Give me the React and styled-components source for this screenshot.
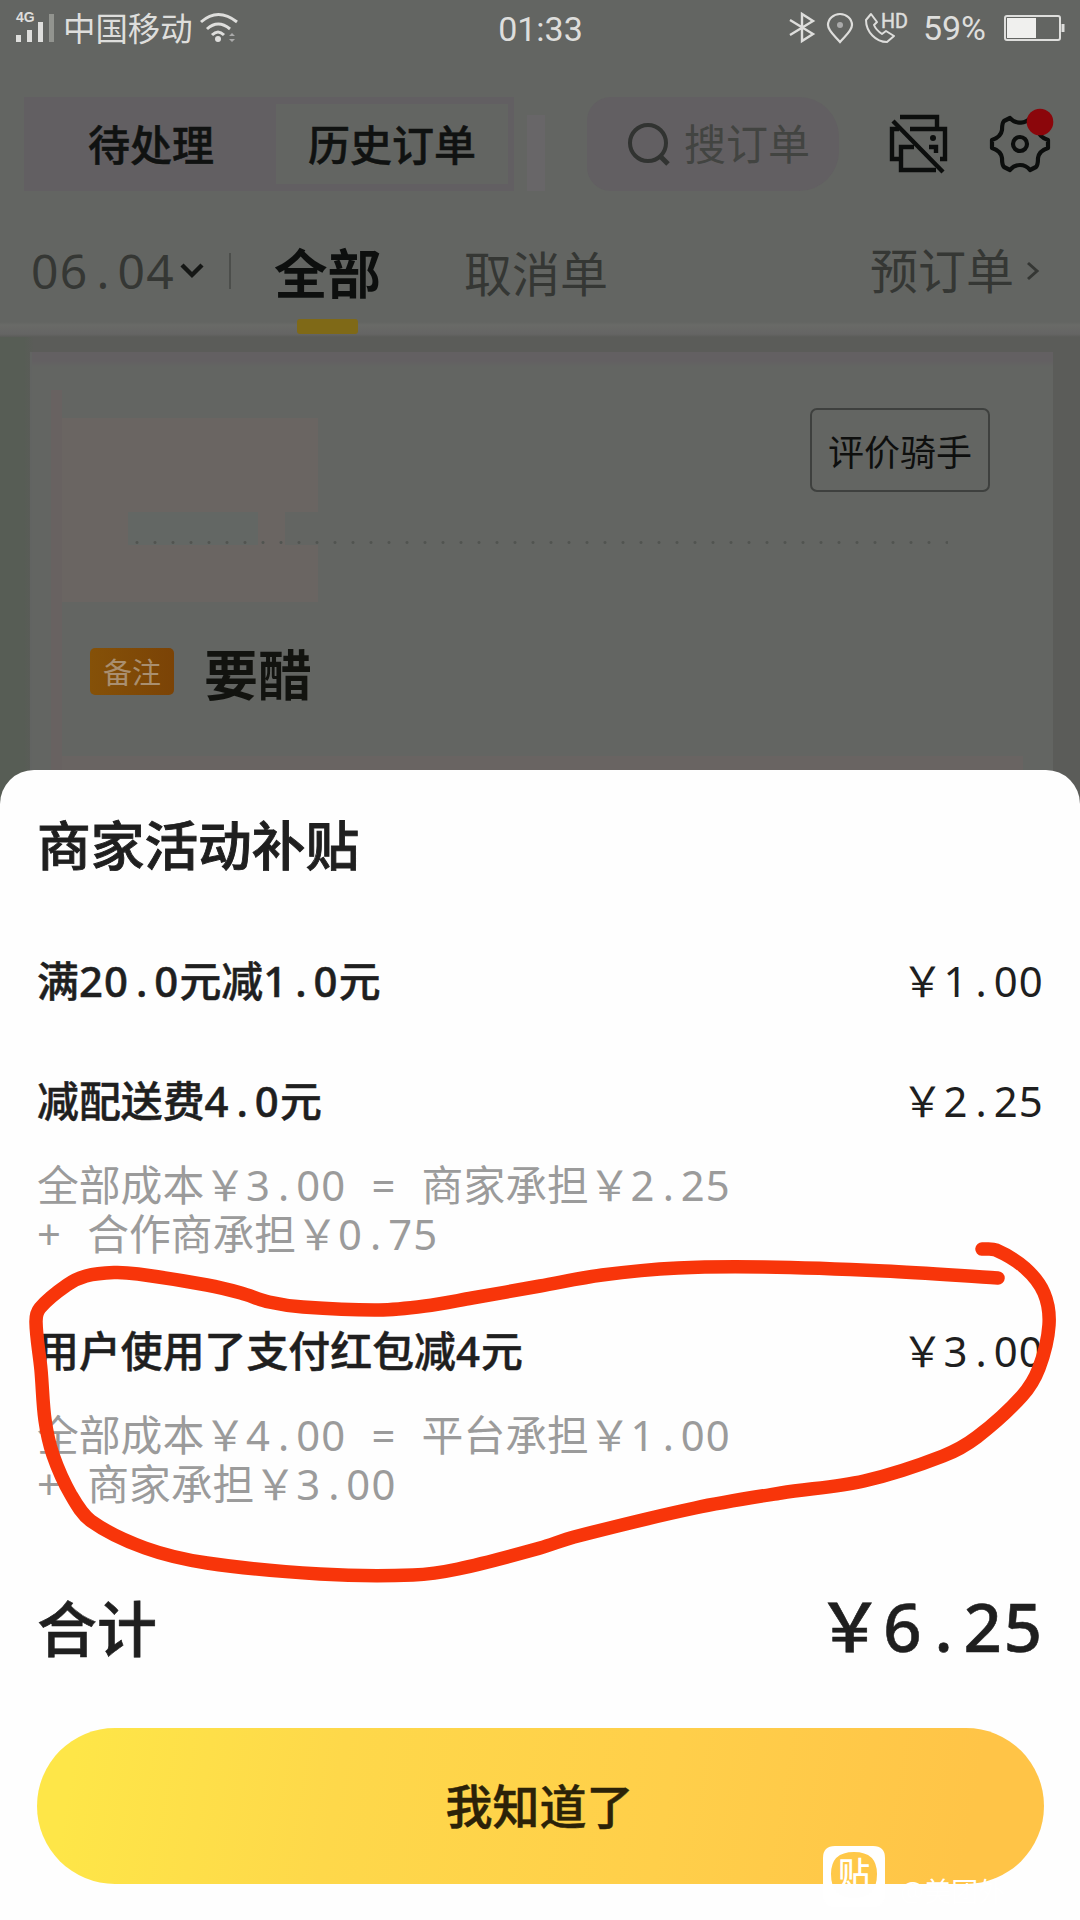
import React from 'react';
import styled, { createGlobalStyle } from 'styled-components';

const GlobalStyle = createGlobalStyle`
  * { box-sizing: border-box; }
  body { margin: 0; background: #636562; }
`;

const Page = styled.div`
  position: relative;
  width: 1080px;
  height: 1920px;
  overflow: hidden;
  display: flex;
  flex-direction: column;
  background: #636562;
  font-family: "Noto Sans", "Noto Sans CJK SC", sans-serif;
  white-space: nowrap;
`;

/* Latin characters sit on a 0.6em grid between full-width characters */
const Digits = styled.span`
  display: inline-block;
  letter-spacing: 0.028em;
`;
const Cell = styled.span`
  display: inline-block;
  width: 0.6em;
  text-align: center;
  white-space: pre;
`;

function Mono({ children }) {
  return children.split(/([0-9=+]+|[. ])/).filter(Boolean).map((part, i) => {
    if (/^[. ]$/.test(part)) return <Cell key={i}>{part}</Cell>;
    if (/^[0-9=+]+$/.test(part)) return <Digits key={i}>{part}</Digits>;
    return part;
  });
}

const StatusBar = styled.div`
  height: 56px;
  flex: none;
  display: grid;
  grid-template-columns: 1fr auto 1fr;
  align-items: center;
  padding: 0 15px 0 16px;
  color: #dededc;
`;
const StatusSide = styled.div`
  display: flex;
  align-items: center;
  justify-content: ${(p) => (p.$end ? 'flex-end' : 'flex-start')};
  gap: ${(p) => p.$gap}px;
`;
const Signal = styled.div`
  display: flex;
  flex-direction: column;
  width: 40px;
  height: 30px;
  margin-top: -3px;
`;
const NetType = styled.span`
  font: 700 14px/11px "Liberation Sans", sans-serif;
  height: 11px;
`;
const Bars = styled.div`
  display: flex;
  align-items: flex-end;
  gap: 6px;
  height: 19px;
`;
const Bar = styled.i`
  width: 5px;
  flex: none;
  height: ${(p) => p.$h}px;
  background: ${(p) => (p.$dim ? '#92948f' : '#dededc')};
`;
const Carrier = styled.span`
  font-size: 32.4px;
  line-height: 40px;
`;
const Clock = styled.span`
  font: 400 34px/40px Roboto, sans-serif;
  margin-top: 2px;
`;
const Percent = styled.span`
  font: 400 34px/40px Roboto, sans-serif;
  margin: 0 6px 0 3px;
`;
const Icon = styled.svg`
  display: block;
  flex: none;
  overflow: visible;
`;

const Header = styled.div`
  flex: none;
  display: flex;
  align-items: center;
  height: 94px;
  margin-top: 41px;
  padding: 0 26px 0 24px;
`;
const Tabs = styled.div`
  display: flex;
  width: 490px;
  height: 94px;
  background: #625f62;
`;
const Tab = styled.div`
  width: ${(p) => p.$w}px;
  padding-left: ${(p) => p.$pl}px;
  height: ${(p) => (p.$active ? 80 : 94)}px;
  margin-top: ${(p) => (p.$active ? 7 : 0)}px;
  background: ${(p) => (p.$active ? '#636562' : 'transparent')};
  color: #101211;
  font-size: 42px;
  font-weight: 500;
  -webkit-text-stroke: 0.5px currentColor;
  line-height: ${(p) => (p.$active ? 82 : 96)}px;
`;
const Sliver = styled.i`
  width: 18px;
  height: 76px;
  margin: 18px 0 0 13px;
  background: #686668;
`;
const Search = styled.div`
  display: flex;
  align-items: center;
  gap: 12px;
  width: 252px;
  height: 94px;
  margin-left: 42px;
  padding-left: 41px;
  border-radius: 24px 40px 40px 24px;
  background: #625f62;
  color: #424441;
  font-size: 42px;
  line-height: 90px;
`;
const HeaderIcons = styled.div`
  display: flex;
  align-items: center;
  gap: 42px;
  margin-left: 51px;
`;

const FilterBar = styled.div`
  flex: none;
  display: flex;
  height: 146px;
  padding: 47px 41px 0 31px;
  background: linear-gradient(to bottom, transparent 131px, #696a67 134px, #656564 143px, #5b5c59 146px);
  color: #353734;
  font-size: 48px;
  line-height: 66px;
`;
const DatePick = styled.div`
  display: flex;
  align-items: center;
  height: 66px;
  gap: 6px;
`;
const Divider = styled.i`
  width: 2px;
  height: 36px;
  margin: 15px 0 0 26px;
  background: #4c4e4b;
`;
const Filter = styled.div`
  display: flex;
  flex-direction: column;
  align-items: center;
  height: 97px;
  margin-left: ${(p) => p.$ml}px;
  padding-top: 3px;
  font-size: ${(p) => (p.$active ? 53.5 : 48)}px;
  font-weight: ${(p) => (p.$active ? 700 : 400)};
  color: ${(p) => (p.$active ? '#0d0f0e' : '#353734')};
`;
const Underline = styled.i`
  width: 61px;
  height: 15px;
  flex: none;
  margin-top: 12px;
  border-radius: 3px;
  background: #7f6917;
`;
const Preorder = styled.div`
  display: flex;
  align-items: center;
  gap: 12px;
  height: 66px;
  margin: 0 0 0 auto;
`;

const Feed = styled.div`
  flex: 1;
  padding: 15px 27px 0 30px;
  background: linear-gradient(to right, #575d55 24px, #5b5c59 34px);
`;
const Card = styled.div`
  height: 100%;
  background: linear-gradient(to bottom, #636062 9px, #636562 15px);
  border-left: 2px solid #626462;
`;
const CardInner = styled.div`
  display: flex;
  flex-direction: column;
  height: 418px;
  margin: 0 30px 0 19px;
  padding: 56px 33px 0 11px;
  background:
    linear-gradient(#686261, #686261) 0 38px / 11px 380px no-repeat,
    linear-gradient(#696462, #696462) 0 404px / 100% 14px no-repeat,
    linear-gradient(#6a6562, #6a6562) 9px 66px / 258px 184px no-repeat;
`;
const RateButton = styled.div`
  align-self: flex-end;
  width: 180px;
  height: 84px;
  border: 2px solid #3e403e;
  border-radius: 7px;
  text-align: center;
  font-size: 36px;
  line-height: 85px;
  color: #0e0f0e;
`;
const Masked = styled.div`
  height: 33px;
  width: 820px;
  margin: 20px 0 0 66px;
  background:
    radial-gradient(circle, #515450 1px, transparent 2px) 0 26px / 18px 9px repeat-x,
    linear-gradient(to right, #636764 130px, transparent 130px, transparent 157px, #636562 157px);
`;
const Note = styled.div`
  display: flex;
  align-items: center;
  gap: 30px;
  height: 60px;
  margin: 96px 0 0 28px;
`;
const NoteTag = styled.span`
  width: 84px;
  height: 47px;
  border-radius: 5px;
  background: linear-gradient(to right, #855108, #7b4306);
  color: #a98f70;
  text-align: center;
  font-size: 29px;
  line-height: 49px;
`;
const NoteText = styled.span`
  color: #12130f;
  font-size: 54px;
  font-weight: 700;
  line-height: 60px;
  padding-top: 8px;
`;

const Sheet = styled.section`
  position: absolute;
  left: 0;
  right: 0;
  bottom: 0;
  height: 1150px;
  display: flex;
  flex-direction: column;
  padding: 43px 36px 36px 37px;
  border-radius: 34px 34px 0 0;
  background: #fefefe;
  color: #1f1f1f;
`;
const Title = styled.h2`
  margin: 0;
  font-size: 53.7px;
  font-weight: 500;
  -webkit-text-stroke: 0.9px currentColor;
  line-height: 66px;
`;
const Item = styled.div`
  margin-top: ${(p) => p.$mt}px;
`;
const Line = styled.div`
  display: flex;
  justify-content: space-between;
  font-size: 41.9px;
  line-height: 60px;
`;
const Name = styled.span`
  font-weight: 500;
  -webkit-text-stroke: 0.5px currentColor;
`;
const Detail = styled.p`
  margin: 29px 0 0;
  color: #9b9b9b;
  font-size: 41.8px;
  line-height: 49.3px;
`;
const Total = styled.div`
  display: flex;
  justify-content: space-between;
  align-items: baseline;
  margin-top: 73px;
  font-size: 60px;
  font-weight: 500;
  -webkit-text-stroke: 0.6px currentColor;
  line-height: 90px;
`;
const Sum = styled.span`
  font-size: 67px;
`;
const Confirm = styled.button`
  height: 156px;
  flex: none;
  width: 1007px;
  margin: auto 0 0;
  padding: 0 2px 5px 0;
  border: 0;
  border-radius: 78px;
  background: linear-gradient(100deg, #fee648 4%, #fed84a 30%, #ffcf4a 62%, #ffc447 92%);
  color: #2b2208;
  font-family: inherit;
  font-size: 47px;
  font-weight: 500;
  -webkit-text-stroke: 0.5px currentColor;
`;
const Scribble = styled.svg`
  position: absolute;
  left: 0;
  top: 0;
  pointer-events: none;
`;
const Watermark = styled.div`
  position: absolute;
  left: 823px;
  top: 1846px;
  display: flex;
  color: #fff;
`;
const Badge = styled.div`
  width: 62px;
  height: 61px;
  display: grid;
  place-items: center;
  & > * { grid-area: 1 / 1; }
`;
const Glyph = styled.span`
  font-size: 32px;
  font-weight: 500;
  line-height: 40px;
  margin-top: -7px;
`;
const Handle = styled.span`
  margin: 28px 0 0 15px;
  font-size: 27px;
  line-height: 36px;
`;

const marks = [
  [998, 1278], [884, 1271], [764, 1267], [678, 1268], [602, 1275], [540, 1286], [472, 1298],
  [425, 1306], [379, 1310], [303, 1307], [269, 1302], [241, 1293], [207, 1285], [138, 1274],
  [114, 1272.5], [86, 1276], [67, 1285], [40, 1308], [36, 1322], [41, 1370], [45, 1420],
  [53, 1455], [71, 1495], [91, 1521], [145, 1548], [207, 1563], [320, 1574], [413, 1575],
  [458, 1569], [540, 1548], [574, 1537], [695, 1508], [781, 1493], [864, 1481], [943, 1456],
  [977, 1437], [1022, 1396], [1039, 1368], [1049, 1325], [1044, 1293], [1025, 1268], [996, 1250], [982, 1249],
];

function smooth(pts) {
  let d = `M${pts[0]}`;
  for (let i = 0; i < pts.length - 1; i++) {
    const a = pts[i - 1] || pts[i];
    const b = pts[i];
    const c = pts[i + 1];
    const e = pts[i + 2] || c;
    const len = Math.hypot(c[0] - b[0], c[1] - b[1]);
    const tangent = (p, q) => {
      const l = Math.hypot(q[0] - p[0], q[1] - p[1]) || 1;
      return [((q[0] - p[0]) / l) * len * 0.33, ((q[1] - p[1]) / l) * len * 0.33];
    };
    const t1 = tangent(a, c);
    const t2 = tangent(b, e);
    d += `C${b[0] + t1[0]},${b[1] + t1[1]} ${c[0] - t2[0]},${c[1] - t2[1]} ${c}`;
  }
  return d;
}

const HdLabel = styled.text`
  font: 400 21px Roboto, sans-serif;
`;

/* full-width yen sign */
const Y = '\uFFE5';

const items = [
  { name: '满20.0元减1.0元', amount: `${Y}1.00`, mt: 72 },
  { name: '减配送费4.0元', amount: `${Y}2.25`, mt: 60, detail: [`全部成本${Y}3.00 = 商家承担${Y}2.25`, `+ 合作商承担${Y}0.75`] },
  { name: '用户使用了支付红包减4元', amount: `${Y}3.00`, mt: 62, detail: [`全部成本${Y}4.00 = 平台承担${Y}1.00`, `+ 商家承担${Y}3.00`] },
];

export default function App() {
  return (
    <Page>
      <GlobalStyle />
      <StatusBar>
        <StatusSide $gap={7}>
          <Signal>
            <NetType>4G</NetType>
            <Bars><Bar $h={7} /><Bar $h={12} /><Bar $h={20} /><Bar $h={28} $dim /></Bars>
          </Signal>
          <Carrier>中国移动</Carrier>
          <Icon width="38" height="30" viewBox="0 0 38 30" fill="none" stroke="#dededc" strokeWidth="3">
            <path d="M1 9Q18 -6 37 9M7 16Q18 6 30 16M12 22Q18 16 24 22" />
            <circle cx="18" cy="26" r="3" fill="#dededc" stroke="none" />
            <path d="M29 23l3-3 3 3zM29 26l3 3 3-3z" fill="#aaa" stroke="none" />
          </Icon>
        </StatusSide>
        <Clock>01:33</Clock>
        <StatusSide $gap={12} $end>
          <Icon width="26" height="30" viewBox="0 0 26 30" fill="none" stroke="#dededc" strokeWidth="2.4">
            <path d="M1 7L24 21L13 28V1L24 8L1 22" />
          </Icon>
          <Icon width="26" height="30" viewBox="0 0 26 30" fill="none" stroke="#dededc" strokeWidth="2.2">
            <path d="M13 29C9 24 1 18 1 12a12 11 0 0 1 24 0C25 18 17 24 13 29Z" />
            <circle cx="13" cy="12" r="3" fill="#aaa" stroke="none" />
          </Icon>
          <Icon width="43" height="30" viewBox="0 0 43 30" fill="none" stroke="#dededc" strokeWidth="2" strokeLinejoin="round">
            <path d="M6 1L1 7C1 19 11 29 22 29L29 23L21 18L17 21Q11 17 9 12L12 9Z" />
            <HdLabel x="16" y="15" textLength="27" lengthAdjust="spacingAndGlyphs" fill="#dededc" stroke="#dededc" strokeWidth="0.5">HD</HdLabel>
          </Icon>
          <Percent>59%</Percent>
          <Icon width="61" height="26" viewBox="0 0 61 26" fill="none" stroke="#dededc" strokeWidth="2">
            <rect x="1" y="1" width="55" height="24" rx="2" />
            <rect x="3" y="3" width="29" height="20" fill="#f0f0ee" stroke="none" />
            <path d="M59 9v8" strokeWidth="3" />
          </Icon>
        </StatusSide>
      </StatusBar>

      <Header>
        <Tabs>
          <Tab $w={252} $pl={64}>待处理</Tab>
          <Tab $w={232} $pl={32} $active>历史订单</Tab>
        </Tabs>
        <Sliver />
        <Search>
          <Icon width="44" height="44" viewBox="0 0 44 44" fill="none" stroke="#313331" strokeWidth="4">
            <circle cx="20" cy="21" r="18" /><path d="M32 34l8 8" strokeWidth="5" />
          </Icon>
          搜订单
        </Search>
        <HeaderIcons>
          <Icon width="58" height="58" viewBox="0 0 58 58" fill="none" stroke="#0c0e0d" strokeWidth="4.4">
            <path d="M10 2H47V13M20 14H55V44H50M9 14H2V44H10M24 32H11V55H46M39 32H46V38" />
            <path d="M3 6L53 57" />
            <circle cx="43" cy="23" r="3" fill="#0c0e0d" stroke="none" />
          </Icon>
          <Icon width="60" height="58" viewBox="0 0 60 58" fill="none" stroke="#0c0e0d" strokeWidth="4.2" strokeLinejoin="round">
            <path d="M2 25Q11 22 12 15Q12 8 14 6L20 3Q24 8 30 7.5Q36 8 40 3L46 6Q48 8 48 15Q49 22 58 25V33Q49 36 48 43Q48 50 46 52L40 55Q36 50 30 50Q24 50 20 55L14 52Q12 50 12 43Q11 36 2 33Z" />
            <circle cx="30" cy="29" r="7" />
            <circle cx="50" cy="7" r="13.3" fill="#8b060b" stroke="none" />
          </Icon>
        </HeaderIcons>
      </Header>

      <FilterBar>
        <DatePick>
          <span><Mono>06.04</Mono></span>
          <Icon width="22" height="14" viewBox="0 0 22 14" fill="none" stroke="#151715" strokeWidth="4.4"><path d="M1 1l10 10L21 1" /></Icon>
        </DatePick>
        <Divider />
        <Filter $ml={43} $active>全部<Underline /></Filter>
        <Filter $ml={83}>取消单</Filter>
        <Preorder>
          预订单
          <Icon width="13" height="18" viewBox="0 0 13 18" fill="none" stroke="#353734" strokeWidth="3"><path d="M2 1l9 8-9 8" /></Icon>
        </Preorder>
      </FilterBar>

      <Feed>
        <Card>
          <CardInner>
            <RateButton>评价骑手</RateButton>
            <Masked />
            <Note><NoteTag>备注</NoteTag><NoteText>要醋</NoteText></Note>
          </CardInner>
        </Card>
      </Feed>

      <Sheet>
        <Title>商家活动补贴</Title>
        {items.map((it) => (
          <Item key={it.name} $mt={it.mt}>
            <Line><Name><Mono>{it.name}</Mono></Name><span><Mono>{it.amount}</Mono></span></Line>
            {it.detail && <Detail><Mono>{it.detail[0]}</Mono><br /><Mono>{it.detail[1]}</Mono></Detail>}
          </Item>
        ))}
        <Total><span>合计</span><Sum><Mono>{`${Y}6.25`}</Mono></Sum></Total>
        <Confirm>我知道了</Confirm>
      </Sheet>

      <Watermark>
        <Badge>
          <Icon width="62" height="61" viewBox="0 0 62 61">
            <path
              d="M12 0H50Q62 0 62 12V49Q62 61 50 61H12Q0 61 0 49V12Q0 0 12 0ZM31 6Q8 6 8 28Q8 52 31 52Q54 52 54 28Q54 6 31 6Z"
              fill="#fff" fillRule="evenodd"
            />
          </Icon>
          <Glyph>贴</Glyph>
        </Badge>
        <Handle>@美团外</Handle>
      </Watermark>
      <Scribble width="1080" height="1920" fill="none">
        <path d={smooth(marks)} stroke="#f8350a" strokeWidth="13.5" strokeLinecap="round" strokeLinejoin="round" />
      </Scribble>
    </Page>
  );
}
